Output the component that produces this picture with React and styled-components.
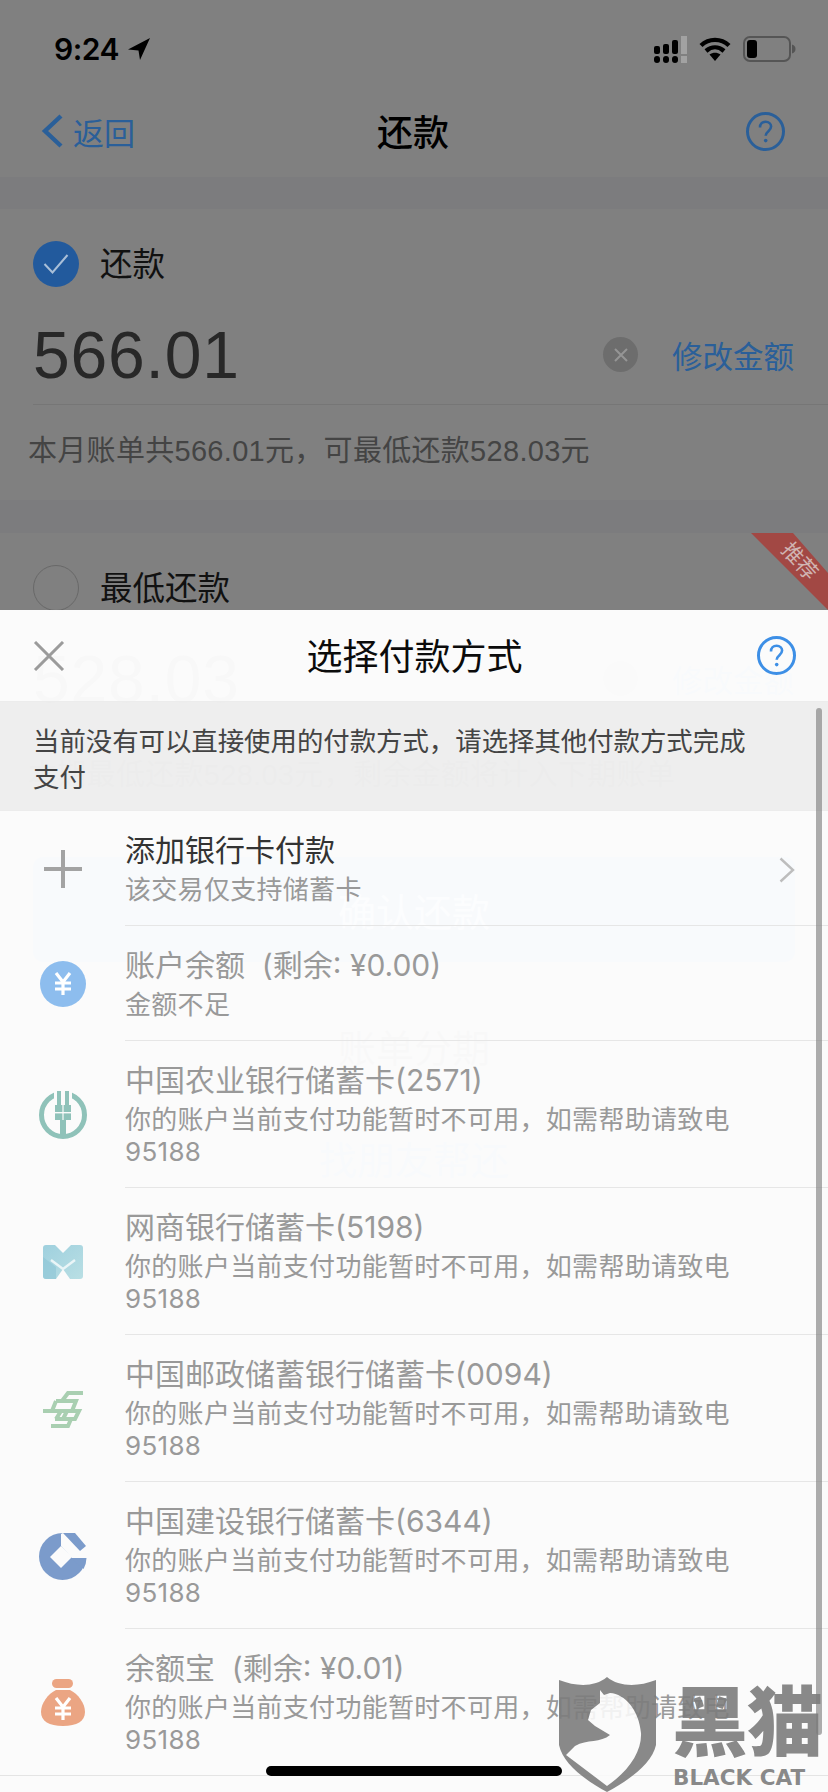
import styled, { createGlobalStyle } from 'styled-components'

const GlobalStyle = createGlobalStyle`
  html, body {
    margin: 0;
    padding: 0;
    background: #808080;
  }
  * {
    box-sizing: border-box;
  }
`

const Screen = styled.div`
  position: relative;
  width: 828px;
  height: 1792px;
  overflow: hidden;
  background: #7c7c7e;
  color: #0c0c0c;
  font-family: "Liberation Sans", "Noto Sans CJK SC", sans-serif;
`

const StatusBar = styled.div`
  display: flex;
  align-items: center;
  justify-content: space-between;
  height: 88px;
  padding: 10px 32px 0 54px;
  background: #808080;
`

const Time = styled.div`
  display: flex;
  align-items: center;
  gap: 9px;
  font-family: Inter, sans-serif;
  font-size: 30px;
  font-weight: 600;
  letter-spacing: -0.5px;
  color: #000;
`

const StatusIcons = styled.div`
  display: flex;
  align-items: center;
  gap: 12px;
`

const Nav = styled.div`
  display: grid;
  grid-template-columns: 1fr auto 1fr;
  align-items: center;
  height: 89px;
  padding: 0 43px 3px 41px;
  background: #808080;
`

const Back = styled.div`
  display: flex;
  align-items: center;
  gap: 10px;
  font-size: 31px;
  color: #2a5f99;
`

const NavTitle = styled.div`
  margin-bottom: 2px;
  font-size: 36px;
  font-weight: 500;
  color: #000;
`

const NavRight = styled.div`
  display: flex;
  justify-content: flex-end;
`

const Card = styled.section`
  position: relative;
  margin-top: ${(props) => props.$gap}px;
  padding-top: 32px;
  background: #808080;
`

const CheckRow = styled.div`
  display: flex;
  align-items: center;
  gap: 21px;
  height: 46px;
  padding-left: 33px;
  font-size: 32.5px;
  color: #111;
`

const CheckLabel = styled.span`
  margin-bottom: 6px;
`

const Check = styled.div`
  display: flex;
  align-items: center;
  justify-content: center;
  width: 46px;
  height: 46px;
  border-radius: 50%;
  background: ${(props) => (props.$on ? '#225a9d' : 'transparent')};
  border: ${(props) => (props.$on ? 'none' : '1.5px solid #686868')};
`

const AmountRow = styled.div`
  display: flex;
  align-items: center;
  height: 100px;
  margin: 18px 0 0 33px;
  padding-right: 34px;
  border-bottom: 1px solid #767676;
`

const Amount = styled.div`
  flex: 1;
  font-size: 66px;
  letter-spacing: 0.8px;
  color: #282828;
`

const Clear = styled.div`
  display: flex;
  align-items: center;
  justify-content: center;
  width: 35px;
  height: 35px;
  margin-right: 34px;
  border-radius: 50%;
  background: #6d6d6d;
`

const EditLink = styled.div`
  font-size: 30.5px;
  color: #2a5f99;
`

const Note = styled.div`
  display: flex;
  align-items: center;
  height: 95px;
  padding: 0 0 9px 28px;
  font-size: 29px;
  letter-spacing: 0.3px;
  color: #444;
`

const Ribbon = styled.div`
  position: absolute;
  top: 0;
  right: 0;
  width: 77px;
  height: 77px;
  background: #a24844;
  clip-path: polygon(0 0, 42px 0, 77px 40px, 77px 77px);
`

const RibbonText = styled.span`
  position: absolute;
  top: 12px;
  left: 29px;
  font-size: 21px;
  color: #d0b4b2;
  transform: rotate(48deg);
`

const ConfirmButton = styled.div`
  display: flex;
  align-items: center;
  justify-content: center;
  height: 105px;
  margin: 33px 33px 0;
  border-radius: 10px;
  background: #2f5f9e;
  font-size: 38px;
  color: #9db7d8;
`

const GhostLink = styled.div`
  display: flex;
  align-items: center;
  justify-content: center;
  gap: 8px;
  height: 112px;
  margin-top: ${(props) => props.$gap || 0}px;
  font-size: 38px;
  color: ${(props) => props.$color};
`

const Sheet = styled.div`
  position: absolute;
  left: 0;
  right: 0;
  bottom: 0;
  display: flex;
  flex-direction: column;
  padding-bottom: 16px;
  background: rgba(255, 255, 255, 0.97);
`

const SheetHeader = styled.div`
  display: grid;
  grid-template-columns: 1fr auto 1fr;
  align-items: center;
  height: 92px;
  padding: 0 32px 0 33px;
  border-bottom: 1px solid #ececec;
`

const SheetTitle = styled.div`
  margin-bottom: 4px;
  font-size: 36px;
  color: #0b0b0b;
`

const InfoBand = styled.div`
  height: 109px;
  padding: 22px 60px 0 33px;
  background: rgba(0, 0, 0, 0.05);
  border-bottom: 1px solid #ececec;
  font-size: 26.4px;
  line-height: 36px;
  color: #444;
`

const List = styled.div`
  border-bottom: 1px solid #e4e4e4;
`

const Row = styled.div`
  display: flex;
  align-items: stretch;
`

const IconCell = styled.div`
  flex: 0 0 125px;
  display: flex;
  align-items: center;
  justify-content: center;
  padding-left: 1px;
`

const RowBody = styled.div`
  flex: 1;
  display: flex;
  align-items: center;
  min-width: 0;
  border-bottom: ${(props) => (props.$last ? 'none' : '1px solid #e6e6e6')};
`

const RowText = styled.div`
  flex: 1;
  padding: 21px 86px 19px 0;
  font-family: Inter, "Noto Sans CJK SC", sans-serif;
`

const RowTitle = styled.div`
  font-size: 30px;
  line-height: 36px;
  color: ${(props) => (props.$muted ? '#999' : '#333')};
`

const RowSub = styled.div`
  margin-top: 6px;
  font-size: 26px;
  line-height: 32px;
  letter-spacing: 0.3px;
  color: #999;
`

const RowArrow = styled.svg`
  position: absolute;
  right: 33px;
  top: 247px;
`

const ScrollThumb = styled.div`
  position: absolute;
  top: 708px;
  right: 6px;
  width: 6px;
  height: 1027px;
  border-radius: 3px;
  background: rgba(120, 120, 120, 0.6);
`

const HomeBar = styled.div`
  position: absolute;
  left: 266px;
  top: 1766px;
  width: 296px;
  height: 10px;
  border-radius: 5px;
  background: #000;
`

const Watermark = styled.div`
  position: absolute;
  left: 559px;
  top: 1677px;
  width: 269px;
  height: 115px;
  opacity: 0.9;
`

const WatermarkName = styled.div`
  position: absolute;
  left: 113px;
  top: 2px;
  width: 170px;
  font-size: 76px;
  line-height: 90px;
  font-weight: 900;
  letter-spacing: -1px;
  color: #7d7d7d;
`

const WatermarkEn = styled.div`
  position: absolute;
  left: 114px;
  top: 88px;
  font-family: "DejaVu Sans", sans-serif;
  font-size: 21.5px;
  line-height: 26px;
  font-weight: 700;
  white-space: nowrap;
  color: #7d7d7d;
`

const HelpIcon = ({ color, size = 39 }) => (
  <svg width={size} height={size} viewBox="0 0 39 39" fill="none">
    <circle cx="19.5" cy="19.5" r="18" stroke={color} strokeWidth="3" />
    <path d="M14 15.5c0-3.6 2.4-5.7 5.6-5.7 3.2 0 5.5 2 5.5 4.8 0 4.6-5.400 4.500-5.400 9.200" stroke={color} strokeWidth="2.6" />
    <circle cx="19.7" cy="28.6" r="1.8" fill={color} />
  </svg>
)

const CloseIcon = () => (
  <svg width="32" height="30" viewBox="0 0 32 30" fill="none">
    <path d="M2 1l28 28M30 1L2 29" stroke="#9b9b9b" strokeWidth="3" />
  </svg>
)

const PlusIcon = () => (
  <svg width="38" height="38" viewBox="0 0 38 38" fill="none">
    <path d="M19 0v38M0 19h38" stroke="#a3a3a3" strokeWidth="4" />
  </svg>
)

const YuanMark = ({ x, y }) => (
  <g transform={`translate(${x} ${y})`} stroke="#fff" strokeWidth="3.2" fill="none">
    <path d="M-7-10L0-1L7-10M-8 0H8M-8 6H8M0-1V12" />
  </g>
)

const BalanceIcon = () => (
  <svg width="46" height="46" viewBox="0 0 46 46">
    <circle cx="23" cy="23" r="23" fill="#8dbdee" />
    <YuanMark x={23} y={22} />
  </svg>
)

const AbcIcon = () => (
  <svg width="48" height="48" viewBox="0 0 48 48">
    <circle cx="24" cy="24" r="21.5" fill="none" stroke="#8fc2b9" strokeWidth="5" />
    <rect x="15" y="0" width="18" height="13" fill="#fbfbfb" />
    <rect x="18" y="0" width="4" height="15" fill="#8fc2b9" />
    <rect x="26" y="0" width="4" height="15" fill="#8fc2b9" />
    <rect x="16" y="14" width="16" height="15" fill="#8fc2b9" />
    <rect x="16" y="21" width="16" height="1.4" fill="#fbfbfb" />
    <rect x="23.4" y="14" width="1.2" height="15" fill="#fbfbfb" />
    <rect x="21" y="29" width="6" height="18" fill="#8fc2b9" />
  </svg>
)

const MyBankIcon = () => (
  <svg width="40" height="34" viewBox="0 0 40 34">
    <defs>
      <linearGradient id="mybank" x1="0" y1="0" x2="1" y2="1">
        <stop offset="0" stopColor="#9fd0de" />
        <stop offset="1" stopColor="#b9dfe4" />
      </linearGradient>
    </defs>
    <rect x="0" y="0" width="40" height="34" rx="3" fill="url(#mybank)" />
    <path d="M12 0h16L20 8z" fill="#fbfbfb" />
    <path d="M13 34l7-10 7 10z" fill="#fbfbfb" />
    <path d="M0 12L13 22V34H3a3 3 0 0 1-3-3z" fill="#8cc4d5" opacity="0.6" />
    <path d="M8 15l12 9 12-9" fill="none" stroke="#eaf5f7" strokeWidth="2.4" />
  </svg>
)

const PostIcon = () => (
  <svg width="40" height="38" viewBox="0 0 40 38" fill="none">
    <path
      d="M40 3H25L19 11M13 11H33L29 21M13 11L9 21M0 21H36L32 29H12M18 21L13 29M24 21L20 29M28 29L25 36H8"
      stroke="#a9cfb1"
      strokeWidth="4"
    />
  </svg>
)

const CcbIcon = () => (
  <svg width="48" height="48" viewBox="0 0 48 48">
    <circle cx="23.5" cy="24.5" r="23.5" fill="#7b9bcb" />
    <path d="M22 2L26 0H48V26H33L22 14z" fill="#fbfbfb" />
    <path d="M24 1h12l11 13-6 5z" fill="#7b9bcb" />
    <path d="M33 26h14.5a23.5 23.5 0 0 1-3 11L33 27z" fill="#7b9bcb" />
    <path d="M22 14l11 11-11 11-11-11z" fill="#fbfbfb" />
  </svg>
)

const BagIcon = () => (
  <svg width="44" height="47" viewBox="0 0 44 47">
    <rect x="11" y="0" width="21" height="9" rx="4.5" fill="#eba583" />
    <path d="M15 11h14c8 4 15 13 15 22 0 9-8 14-22 14S0 42 0 33c0-9 7-18 15-22z" fill="#eba583" />
    <YuanMark x={22} y={29} />
  </svg>
)

const methods = [
  { icon: <PlusIcon />, title: '添加银行卡付款', sub: '该交易仅支持储蓄卡' },
  { icon: <BalanceIcon />, title: '账户余额\u00a0\u00a0(剩余: ¥0.00)', sub: '金额不足', muted: true },
  { icon: <AbcIcon />, title: '中国农业银行储蓄卡(2571)', muted: true },
  { icon: <MyBankIcon />, title: '网商银行储蓄卡(5198)', muted: true },
  { icon: <PostIcon />, title: '中国邮政储蓄银行储蓄卡(0094)', muted: true },
  { icon: <CcbIcon />, title: '中国建设银行储蓄卡(6344)', muted: true },
  { icon: <BagIcon />, title: '余额宝\u00a0\u00a0(剩余: ¥0.01)', muted: true },
]

const unavailable = '你的账户当前支付功能暂时不可用，如需帮助请致电95188'

const App = () => {
  return (
    <Screen>
      <GlobalStyle />
      <StatusBar>
        <Time>
          9:24
          <svg width="22" height="22" viewBox="0 0 22 22">
            <path d="M22 0L0 11.5l10.5 1L12 22z" fill="#000" />
          </svg>
        </Time>
        <StatusIcons>
          <svg width="33" height="27" viewBox="0 0 33 27">
            <rect x="0" y="10" width="6" height="8" rx="2" fill="#000" />
            <rect x="9" y="8" width="6" height="10" rx="2" fill="#000" />
            <rect x="18" y="4" width="6" height="14" rx="2" fill="#000" />
            <rect x="27" y="0" width="6" height="18" fill="#a2a2a2" />
            <rect x="0" y="20" width="6" height="7" rx="3" fill="#000" />
            <rect x="9" y="20" width="6" height="7" rx="3" fill="#000" />
            <rect x="18" y="20" width="6" height="7" rx="3" fill="#000" />
            <rect x="27" y="20" width="6" height="7" fill="#a2a2a2" />
          </svg>
          <svg width="32" height="24" viewBox="0 0 32 24" fill="none">
            <path d="M2 8.500C10 1 22 1 30 8.500M7 14c5.500-4.800 12.500-4.800 18 0" stroke="#000" strokeWidth="4.4" />
            <path d="M10.500 17.500c3.500-2.500 7.500-2.500 11 0L16 24z" fill="#000" />
          </svg>
          <svg width="53" height="26" viewBox="0 0 53 26" fill="none">
            <rect x="1" y="1" width="46" height="24" rx="6" stroke="#555" strokeWidth="2" />
            <rect x="4" y="4" width="10" height="18" rx="3" fill="#000" />
            <path d="M49 8.500c2.500.5 3.500 2.500 3.500 4.500s-1 4-3.500 4.500z" fill="#555" />
          </svg>
        </StatusIcons>
      </StatusBar>

      <Nav>
        <Back>
          <svg width="22" height="34" viewBox="0 0 22 34" fill="none">
            <path d="M20 2L4 17l16 15" stroke="#2a5f99" strokeWidth="4.4" />
          </svg>
          返回
        </Back>
        <NavTitle>还款</NavTitle>
        <NavRight>
          <HelpIcon color="#2a5f99" />
        </NavRight>
      </Nav>

      <Card $gap={32}>
        <CheckRow>
          <Check $on>
            <svg width="26" height="22" viewBox="0 0 26 22" fill="none">
              <path d="M1.500 11l8 8.500L24.500 2" stroke="#a9bfd8" strokeWidth="2" />
            </svg>
          </Check>
          <CheckLabel>还款</CheckLabel>
        </CheckRow>
        <AmountRow>
          <Amount>566.01</Amount>
          <Clear>
            <svg width="16" height="16" viewBox="0 0 16 16" fill="none">
              <path d="M2 2l12 12M14 2L2 14" stroke="#959595" strokeWidth="2" />
            </svg>
          </Clear>
          <EditLink>修改金额</EditLink>
        </AmountRow>
        <Note>本月账单共566.01元，可最低还款528.03元</Note>
      </Card>

      <Card $gap={33}>
        <Ribbon>
          <RibbonText>推荐</RibbonText>
        </Ribbon>
        <CheckRow>
          <Check />
          <CheckLabel>最低还款</CheckLabel>
        </CheckRow>
        <AmountRow>
          <Amount>528.03</Amount>
          <Clear />
          <EditLink>修改金额</EditLink>
        </AmountRow>
        <Note>本期最低还款528.03元，剩余金额将计入下期账单</Note>
      </Card>

      <ConfirmButton>确认还款</ConfirmButton>
      <GhostLink $gap={27} $color="#333">账单分期</GhostLink>
      <GhostLink $color="#25609f">找朋友帮还</GhostLink>

      <Sheet>
        <SheetHeader>
          <CloseIcon />
          <SheetTitle>选择付款方式</SheetTitle>
          <NavRight>
            <HelpIcon color="#3d8fe6" />
          </NavRight>
        </SheetHeader>
        <InfoBand>当前没有可以直接使用的付款方式，请选择其他付款方式完成支付</InfoBand>
        <List>
          {methods.map((item, index) => (
            <Row key={item.title}>
              <IconCell>{item.icon}</IconCell>
              <RowBody $last={index === methods.length - 1}>
                <RowText>
                  <RowTitle $muted={item.muted}>{item.title}</RowTitle>
                  <RowSub>{item.sub || unavailable}</RowSub>
                </RowText>
              </RowBody>
            </Row>
          ))}
        </List>
        <RowArrow width="16" height="26" viewBox="0 0 16 26" fill="none">
          <path d="M1.500 1.500L14 13 1.500 24.500" stroke="#bdbdbd" strokeWidth="2.4" />
        </RowArrow>
      </Sheet>

      <ScrollThumb />
      <Watermark>
        <svg width="97" height="115" viewBox="0 0 97 115">
          <path
            d="M0 3C18 10 36 10 48 0C60 10 79 10 97 3V68C93 86 72 102 48 115C24 102 4 86 0 68Z"
            fill="#7d7d7d"
          />
          <path
            d="M41 13L45 18L51 16C66 17 80 33 82 56C83 74 70 94 48 109L7 78L16 69C28 62 42 66 51 58L36 49L29 43L32 33L41 26Z"
            fill="#fbfbfb"
          />
        </svg>
        <WatermarkName>黑猫</WatermarkName>
        <WatermarkEn>BLACK CAT</WatermarkEn>
      </Watermark>
      <HomeBar />
    </Screen>
  )
}

export default App
